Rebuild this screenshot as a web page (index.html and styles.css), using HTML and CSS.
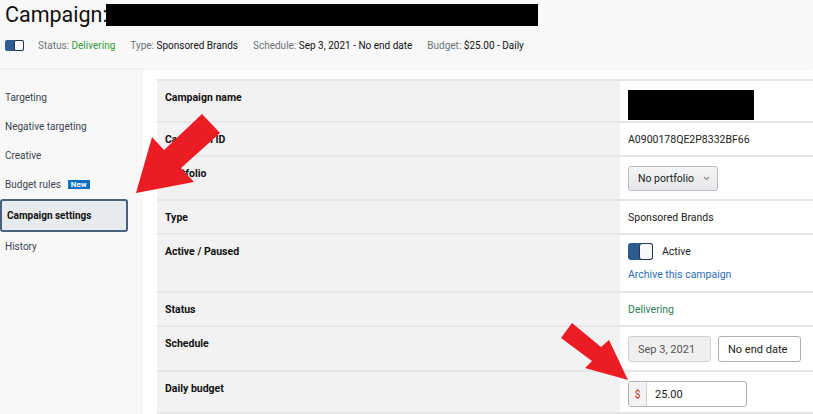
FILE: index.html
```html
<!DOCTYPE html>
<html lang="en">
<head>
  <meta charset="UTF-8" />
  <meta name="viewport" content="width=device-width, initial-scale=1" />
  <title>Campaign settings</title>
  <link rel="stylesheet" href="styles.css">
</head>
<body>
  <header class="page-head">
    <div class="title-row">
      <h1 class="title">Campaign:</h1>
      <div class="redact title-redact"></div>
    </div>
    <div class="summary">
      <span class="mini-switch"><span class="mini-knob"></span></span>
      <span class="meta"><span class="meta-key">Status:</span> <span class="green">Delivering</span></span>
      <span class="meta"><span class="meta-key">Type:</span> Sponsored Brands</span>
      <span class="meta"><span class="meta-key">Schedule:</span> Sep 3, 2021 - No end date</span>
      <span class="meta"><span class="meta-key">Budget:</span> $25.00 - Daily</span>
    </div>
  </header>

  <div class="layout">
    <nav class="side">
      <a class="side-item">Targeting</a>
      <a class="side-item">Negative targeting</a>
      <a class="side-item">Creative</a>
      <a class="side-item">Budget rules <span class="badge">New</span></a>
      <a class="side-item active">Campaign settings</a>
      <a class="side-item">History</a>
    </nav>

    <main class="content">
      <div class="settings">
        <div class="row">
          <div class="label">Campaign name</div>
          <div class="value name-cell"><div class="redact name-redact"></div></div>
        </div>
        <div class="row">
          <div class="label">Campaign ID</div>
          <div class="value">A0900178QE2P8332BF66</div>
        </div>
        <div class="row">
          <div class="label">Portfolio</div>
          <div class="value control-cell">
            <button class="dropdown">No portfolio
              <svg width="7" height="5" viewBox="0 0 7 5"><path d="M1 1l2.5 2.5L6 1" fill="none" stroke="#888" stroke-width="1.2"/></svg>
            </button>
          </div>
        </div>
        <div class="row">
          <div class="label">Type</div>
          <div class="value">Sponsored Brands</div>
        </div>
        <div class="row">
          <div class="label">Active / Paused</div>
          <div class="value active-cell">
            <div class="switch-line">
              <span class="switch"><span class="knob"></span></span>
              <span>Active</span>
            </div>
            <a class="link">Archive this campaign</a>
          </div>
        </div>
        <div class="row">
          <div class="label">Status</div>
          <div class="value status-green">Delivering</div>
        </div>
        <div class="row">
          <div class="label">Schedule</div>
          <div class="value control-cell dates">
            <div class="field disabled">Sep 3, 2021</div>
            <div class="field">No end date</div>
          </div>
        </div>
        <div class="row">
          <div class="label">Daily budget</div>
          <div class="value control-cell budget-cell">
            <div class="money">
              <span class="currency">$</span>
              <span class="amount">25.00</span>
            </div>
          </div>
        </div>
      </div>
    </main>
  </div>

  <!-- red annotation arrows drawn over the screenshot -->
  <svg class="marks" width="813" height="414" viewBox="0 0 813 414">
    <polygon fill="#ec1c24" points="202,114 220,133 181,168 194,182 136,193 152,137 164,150"/>
    <polygon fill="#ec1c24" points="572,323 601,347 609,340 628,380 585,368 592,361 561,338"/>
  </svg>
</body>
</html>
```

FILE: styles.css
```css
body {
  margin: 0;
  position: relative;
  background: #fff;
  font-family: Roboto, "Liberation Sans", sans-serif;
  font-size: 10.5px;
  color: #111;
  overflow: hidden;
}

/* Header */
.page-head {
  background: #f8f8f8;
  height: 68px;
  box-sizing: border-box;
  padding: 2px 0 0 5px;
  box-shadow: 0 1px 2px rgba(0, 0, 0, 0.08);
  position: relative;
  z-index: 1;
}

.title-row {
  display: flex;
  align-items: flex-start;
  height: 28px;
}

.title {
  margin: 0;
  font-size: 21.5px;
  line-height: 26px;
  font-weight: normal;
  color: #111;
}

.redact {
  background: #000;
}

.title-redact {
  width: 432px;
  height: 22px;
  margin: 2px 0 0 -2px;
}

.summary {
  display: flex;
  align-items: center;
  height: 30px;
  gap: 15px;
  font-size: 10px;
  color: #111;
}

.meta-key {
  color: #6b7479;
}

.green {
  color: #2f9a3a;
}

.mini-switch {
  display: flex;
  justify-content: flex-end;
  width: 19px;
  height: 11px;
  background: #2f5d91;
  border-radius: 2px;
  margin-right: -1px;
}

.mini-knob {
  width: 10px;
  height: 11px;
  box-sizing: border-box;
  background: #fff;
  border: 1px solid #23364d;
  border-radius: 2px;
}

/* Body layout */
.layout {
  display: flex;
  min-height: calc(100vh - 68px);
}

.side {
  width: 143px;
  flex-shrink: 0;
  background: #f8f8f8;
  padding-top: 15px;
  display: flex;
  flex-direction: column;
}

.side-item {
  display: flex;
  align-items: center;
  padding: 8px 5px;
  line-height: 13px;
  color: #3b4550;
  font-size: 10px;
}

.side-item.active {
  margin-right: 15px;
  padding: 8px 5px;
  border: 2px solid #46607e;
  border-radius: 3px;
  background: #e8ebee;
  font-weight: bold;
  color: #111;
}

.badge {
  margin-left: 7px;
  padding: 0 3px;
  background: #0a6fc2;
  color: #fff;
  font-size: 8px;
  font-weight: bold;
  line-height: 9px;
}

.content {
  flex: 1;
  padding: 11px 0 0 14px;
}

/* Settings table */
.settings {
  border-top: 2px solid #e6e6e6;
}

.row {
  display: grid;
  grid-template-columns: 463px 1fr;
  border-bottom: 2px solid #e6e6e6;
}

.label {
  background: #f2f2f2;
  padding: 10px 8px 9px;
  line-height: 13px;
  font-weight: bold;
}

.value {
  padding: 10px 8px 9px;
  line-height: 13px;
  color: #222;
}

.name-cell {
  padding: 9px 8px 1px;
}

.name-redact {
  width: 126px;
  height: 30px;
}

.control-cell {
  padding: 9px 8px 8px;
}

.dropdown {
  display: flex;
  align-items: center;
  gap: 9px;
  width: 90px;
  height: 25px;
  padding: 0 0 0 9px;
  border: 1px solid #b9bcc1;
  border-radius: 3px;
  background: linear-gradient(#f4f5f6, #e6e7e9);
  font: inherit;
  color: #222;
}

.active-cell {
  padding: 8px 8px 10px;
}

.switch-line {
  display: flex;
  align-items: center;
  gap: 9px;
  height: 17px;
}

.switch {
  display: flex;
  justify-content: flex-end;
  width: 25px;
  height: 17px;
  background: #2c5b8f;
  border-radius: 3px;
}

.knob {
  width: 14px;
  height: 17px;
  box-sizing: border-box;
  background: #f8f8f8;
  border: 1.5px solid #23364d;
  border-radius: 3px;
}

.link {
  display: block;
  margin-top: 8px;
  color: #2a6ebb;
}

.status-green {
  color: #2e7d5b;
}

.dates {
  display: flex;
  gap: 7px;
}

.field {
  width: 83px;
  height: 26px;
  box-sizing: border-box;
  padding-left: 9px;
  display: flex;
  align-items: center;
  border: 1px solid #aab0b5;
  border-radius: 3px;
  background: #fff;
  font-size: 11px;
}

.field.disabled {
  background: #f0f0f0;
  border-color: #cfd2d4;
  color: #555;
}

.budget-cell {
  padding-bottom: 5px;
}

.money {
  display: flex;
  width: 119px;
  height: 26px;
  box-sizing: border-box;
  border: 1px solid #aab0b5;
  border-radius: 3px;
  font-size: 11px;
}

.currency {
  width: 17px;
  display: flex;
  align-items: center;
  justify-content: center;
  background: #f3f3f3;
  border-right: 1px solid #cfd2d4;
  color: #b12704;
  font-size: 10px;
}

.amount {
  display: flex;
  align-items: center;
  padding-left: 8px;
}

.marks {
  position: absolute;
  top: 0;
  left: 0;
  z-index: 2;
  pointer-events: none;
}
```
